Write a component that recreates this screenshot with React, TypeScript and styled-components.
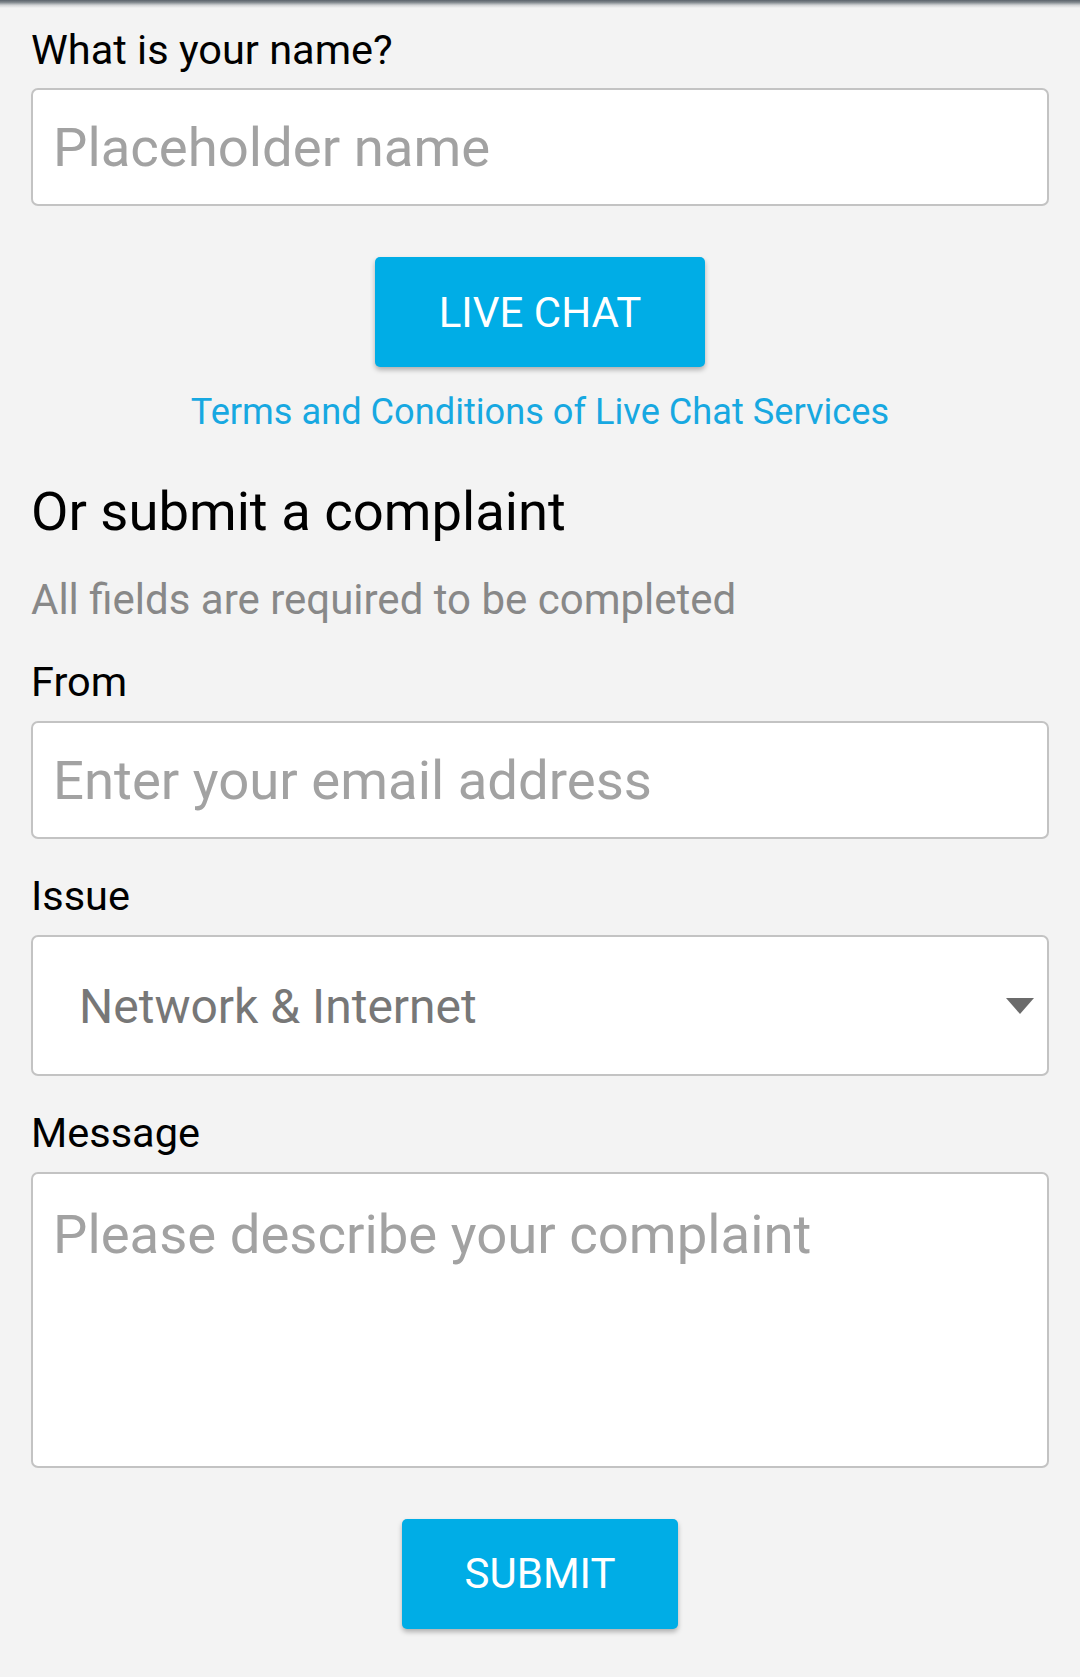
import React from "react";
import styled, { createGlobalStyle } from "styled-components";

const GlobalStyle = createGlobalStyle`
  html, body {
    margin: 0;
    padding: 0;
    background: #f3f3f3;
  }
  body {
    font-family: Roboto, "Noto Sans", "Liberation Sans", sans-serif;
    color: #000;
  }
  * { box-sizing: border-box; }
`;

const Page = styled.div`
  min-height: 1677px;
  background: #f3f3f3;
  display: flex;
  flex-direction: column;
`;

const TopShade = styled.div`
  height: 8px;
  background: linear-gradient(
    to bottom,
    rgba(90, 98, 106, 1) 0%,
    rgba(110, 118, 124, 0.85) 30%,
    rgba(170, 174, 178, 0.45) 65%,
    rgba(243, 243, 243, 0) 100%
  );
`;

const Form = styled.form`
  display: flex;
  flex-direction: column;
  padding: 0 31px;
`;

const Label = styled.label<{ $top: number }>`
  display: block;
  font-size: 41.5px;
  line-height: 40px;
  color: #000;
  margin-top: ${(p) => p.$top}px;
  margin-bottom: 18.5px;
`;

const fieldBase = `
  width: 100%;
  background: #fff;
  border: 2px solid #c3c3c3;
  border-radius: 7px;
  font-family: Roboto, "Noto Sans", "Liberation Sans", sans-serif;
  color: #333;
  outline: none;
`;

const TextInput = styled.input`
  ${fieldBase}
  height: 118px;
  padding: 0 20px;
  font-size: 54.5px;
  &::placeholder {
    color: #a2a2a2;
    opacity: 1;
  }
`;

const TextArea = styled.textarea`
  ${fieldBase}
  display: block;
  height: 296px;
  padding: 29px 20px 0 20px;
  font-size: 54.5px;
  line-height: 63px;
  resize: none;
  &::placeholder {
    color: #a2a2a2;
    opacity: 1;
  }
`;

const SelectBox = styled.div`
  ${fieldBase}
  height: 141px;
  display: flex;
  align-items: center;
  justify-content: space-between;
  padding: 0 13px 0 46px;
`;

const SelectValue = styled.span`
  font-size: 48px;
  color: #777;
  padding-top: 2px;
`;

const Caret = styled.svg`
  width: 28px;
  height: 16px;
  display: block;
  margin-top: 2px;
`;

const ButtonRow = styled.div<{ $top: number }>`
  display: flex;
  justify-content: center;
  margin-top: ${(p) => p.$top}px;
`;

const PrimaryButton = styled.button<{ $width: number }>`
  width: ${(p) => p.$width}px;
  height: 110px;
  border: none;
  border-radius: 5px;
  background: #00ade6;
  color: #fff;
  font-family: Roboto, "Noto Sans", "Liberation Sans", sans-serif;
  font-size: 42px;
  text-transform: uppercase;
  box-shadow: 0 3px 5px rgba(0, 0, 0, 0.28);
  cursor: pointer;
  padding: 0;
`;

const TermsLink = styled.a`
  display: block;
  margin-top: 26.5px;
  text-align: center;
  font-size: 36.2px;
  line-height: 35.5px;
  color: #17a8e1;
  text-decoration: none;
`;

const Heading = styled.h2`
  margin: 56px 0 0;
  font-size: 54.4px;
  line-height: 54px;
  font-weight: 400;
  color: #000;
`;

const Hint = styled.p`
  margin: 40.7px 0 0;
  font-size: 42px;
  line-height: 40.5px;
  color: #888;
`;

export default function App() {
  return (
    <Page>
      <GlobalStyle />
      <TopShade />
      <Form onSubmit={(e) => e.preventDefault()}>
        <Label $top={21.5} htmlFor="name">What is your name?</Label>
        <TextInput id="name" placeholder="Placeholder name" />

        <ButtonRow $top={51}>
          <PrimaryButton type="button" $width={330}>Live Chat</PrimaryButton>
        </ButtonRow>
        <TermsLink href="#">Terms and Conditions of Live Chat Services</TermsLink>

        <Heading>Or submit a complaint</Heading>
        <Hint>All fields are required to be completed</Hint>

        <Label $top={42} htmlFor="from">From</Label>
        <TextInput id="from" placeholder="Enter your email address" />

        <Label $top={37.5}>Issue</Label>
        <SelectBox>
          <SelectValue>Network &amp; Internet</SelectValue>
          <Caret viewBox="0 0 28 16">
            <polygon points="0,0 28,0 14,16" fill="#6b6b6b" />
          </Caret>
        </SelectBox>

        <Label $top={37.5} htmlFor="msg">Message</Label>
        <TextArea id="msg" placeholder="Please describe your complaint" />

        <ButtonRow $top={51}>
          <PrimaryButton type="submit" $width={276}>Submit</PrimaryButton>
        </ButtonRow>
      </Form>
    </Page>
  );
}
